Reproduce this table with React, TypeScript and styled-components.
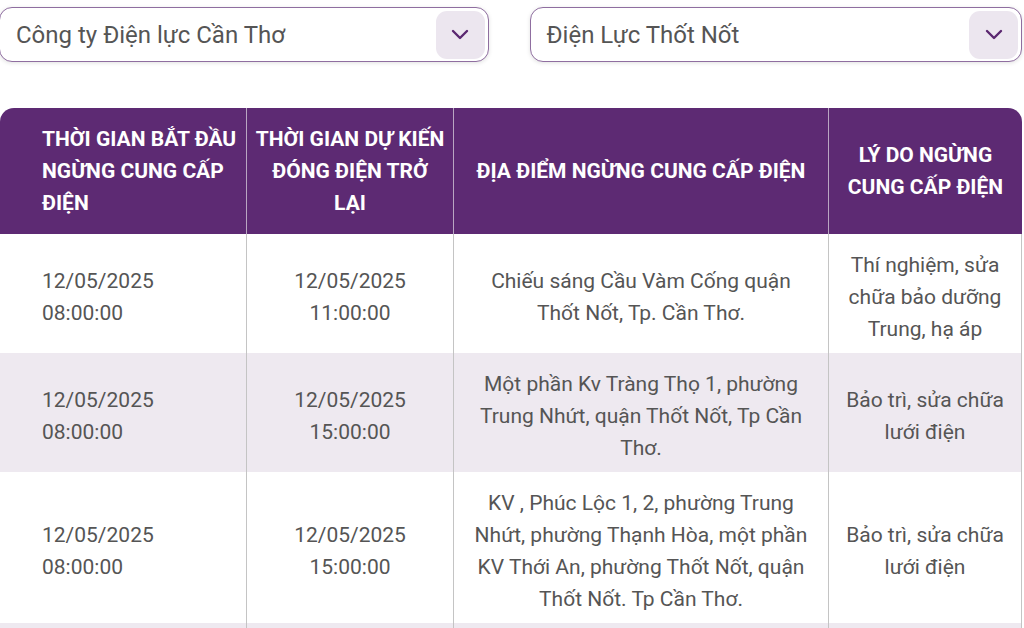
import React from 'react';
import styled, {createGlobalStyle} from "styled-components";

const GlobalStyle = createGlobalStyle`
  body {
    margin: 0;
    background: #fff;
    font-family: Roboto, "Noto Sans", sans-serif;
    overflow: hidden;
  }
`;

const Page = styled.div`
  width: 1024px;
  height: 628px;
  overflow: hidden;
`;

const Filters = styled.div`
  display: flex;
  gap: 41px;
  padding: 7px 2px 0 0;
  margin-left: -1px;
`;

const Select = styled.div<{ $width: number }>`
  width: ${p => p.$width}px;
  height: 55px;
  box-sizing: border-box;
  border: 1px solid #8f6ea0;
  border-radius: 13px;
  box-shadow: 0 1px 4px rgba(0, 0, 0, 0.12);
  display: flex;
  align-items: center;
  justify-content: space-between;
  padding: 0 3px 0 16px;
  background: #fff;
`;

const SelectText = styled.span`
  font-size: 24px;
  color: #555;
  white-space: nowrap;
`;

const ChevronBox = styled.div`
  width: 49px;
  height: 48px;
  border-radius: 11px;
  background: #ece6ef;
  display: flex;
  align-items: center;
  justify-content: center;
`;

const Chevron = () => (
  <svg width="18" height="11" viewBox="0 0 18 11" fill="none">
    <path d="M2 2l7 7 7-7" stroke="#5b2770" strokeWidth="2.4" strokeLinecap="round" strokeLinejoin="round"/>
  </svg>
);

const Table = styled.table`
  margin-top: 46px;
  width: 1022px;
  table-layout: fixed;
  border-collapse: separate;
  border-spacing: 0;
`;

const Th = styled.th<{ $left?: boolean }>`
  background: #5d2a73;
  color: #fff;
  font-weight: 700;
  font-size: 21px;
  line-height: 32px;
  padding: ${p => (p.$left ? "15px 6px 15px 42px" : "15px 8px")};
  text-align: ${p => (p.$left ? "left" : "center")};
  vertical-align: middle;
  border-right: 1px solid #b9a6c2;
  &:first-child { border-top-left-radius: 14px; }
  &:last-child { border-top-right-radius: 14px; border-right: none; }
`;

const Row = styled.tr<{ $shaded?: boolean }>`
  background: ${p => (p.$shaded ? "#eee9f0" : "#fff")};
`;

const Td = styled.td<{ $left?: boolean }>`
  font-size: 21px;
  line-height: 32px;
  color: #555;
  padding: ${p => (p.$left ? "15px 6px 8px 42px" : "15px 17px 8px")};
  text-align: ${p => (p.$left ? "left" : "center")};
  vertical-align: middle;
  border-right: 1px solid #c4c4c4;
`;

const rows = [
  {
    start: ["12/05/2025", "08:00:00"],
    end: ["12/05/2025", "11:00:00"],
    place: "Chiếu sáng Cầu Vàm Cống quận Thốt Nốt, Tp. Cần Thơ.",
    reason: "Thí nghiệm, sửa chữa bảo dưỡng Trung, hạ áp",
  },
  {
    start: ["12/05/2025", "08:00:00"],
    end: ["12/05/2025", "15:00:00"],
    place: "Một phần Kv Tràng Thọ 1, phường Trung Nhứt, quận Thốt Nốt, Tp Cần Thơ.",
    reason: "Bảo trì, sửa chữa lưới điện",
  },
  {
    start: ["12/05/2025", "08:00:00"],
    end: ["12/05/2025", "15:00:00"],
    place: "KV , Phúc Lộc 1, 2, phường Trung Nhứt, phường Thạnh Hòa, một phần KV Thới An, phường Thốt Nốt, quận Thốt Nốt. Tp Cần Thơ.",
    reason: "Bảo trì, sửa chữa lưới điện",
  },
];

const App = () => {
  return (
    <Page>
      <GlobalStyle/>
      <Filters>
        <Select $width={490}>
          <SelectText>Công ty Điện lực Cần Thơ</SelectText>
          <ChevronBox><Chevron/></ChevronBox>
        </Select>
        <Select $width={493}>
          <SelectText>Điện Lực Thốt Nốt</SelectText>
          <ChevronBox><Chevron/></ChevronBox>
        </Select>
      </Filters>
      <Table>
        <colgroup>
          <col style={{width: 247}}/>
          <col style={{width: 207}}/>
          <col style={{width: 375}}/>
          <col style={{width: 193}}/>
        </colgroup>
        <thead>
          <tr>
            <Th $left>THỜI GIAN BẮT ĐẦU NGỪNG CUNG CẤP ĐIỆN</Th>
            <Th>THỜI GIAN DỰ KIẾN ĐÓNG ĐIỆN TRỞ LẠI</Th>
            <Th>ĐỊA ĐIỂM NGỪNG CUNG CẤP ĐIỆN</Th>
            <Th>LÝ DO NGỪNG CUNG CẤP ĐIỆN</Th>
          </tr>
        </thead>
        <tbody>
          {rows.map((r, i) => (
            <Row key={i} $shaded={i % 2 === 1}>
              <Td $left>{r.start[0]}<br/>{r.start[1]}</Td>
              <Td>{r.end[0]}<br/>{r.end[1]}</Td>
              <Td>{r.place}</Td>
              <Td>{r.reason}</Td>
            </Row>
          ))}
          <Row $shaded>
            <Td $left/>
            <Td/>
            <Td/>
            <Td/>
          </Row>
        </tbody>
      </Table>
    </Page>
  );
};

export default App;
